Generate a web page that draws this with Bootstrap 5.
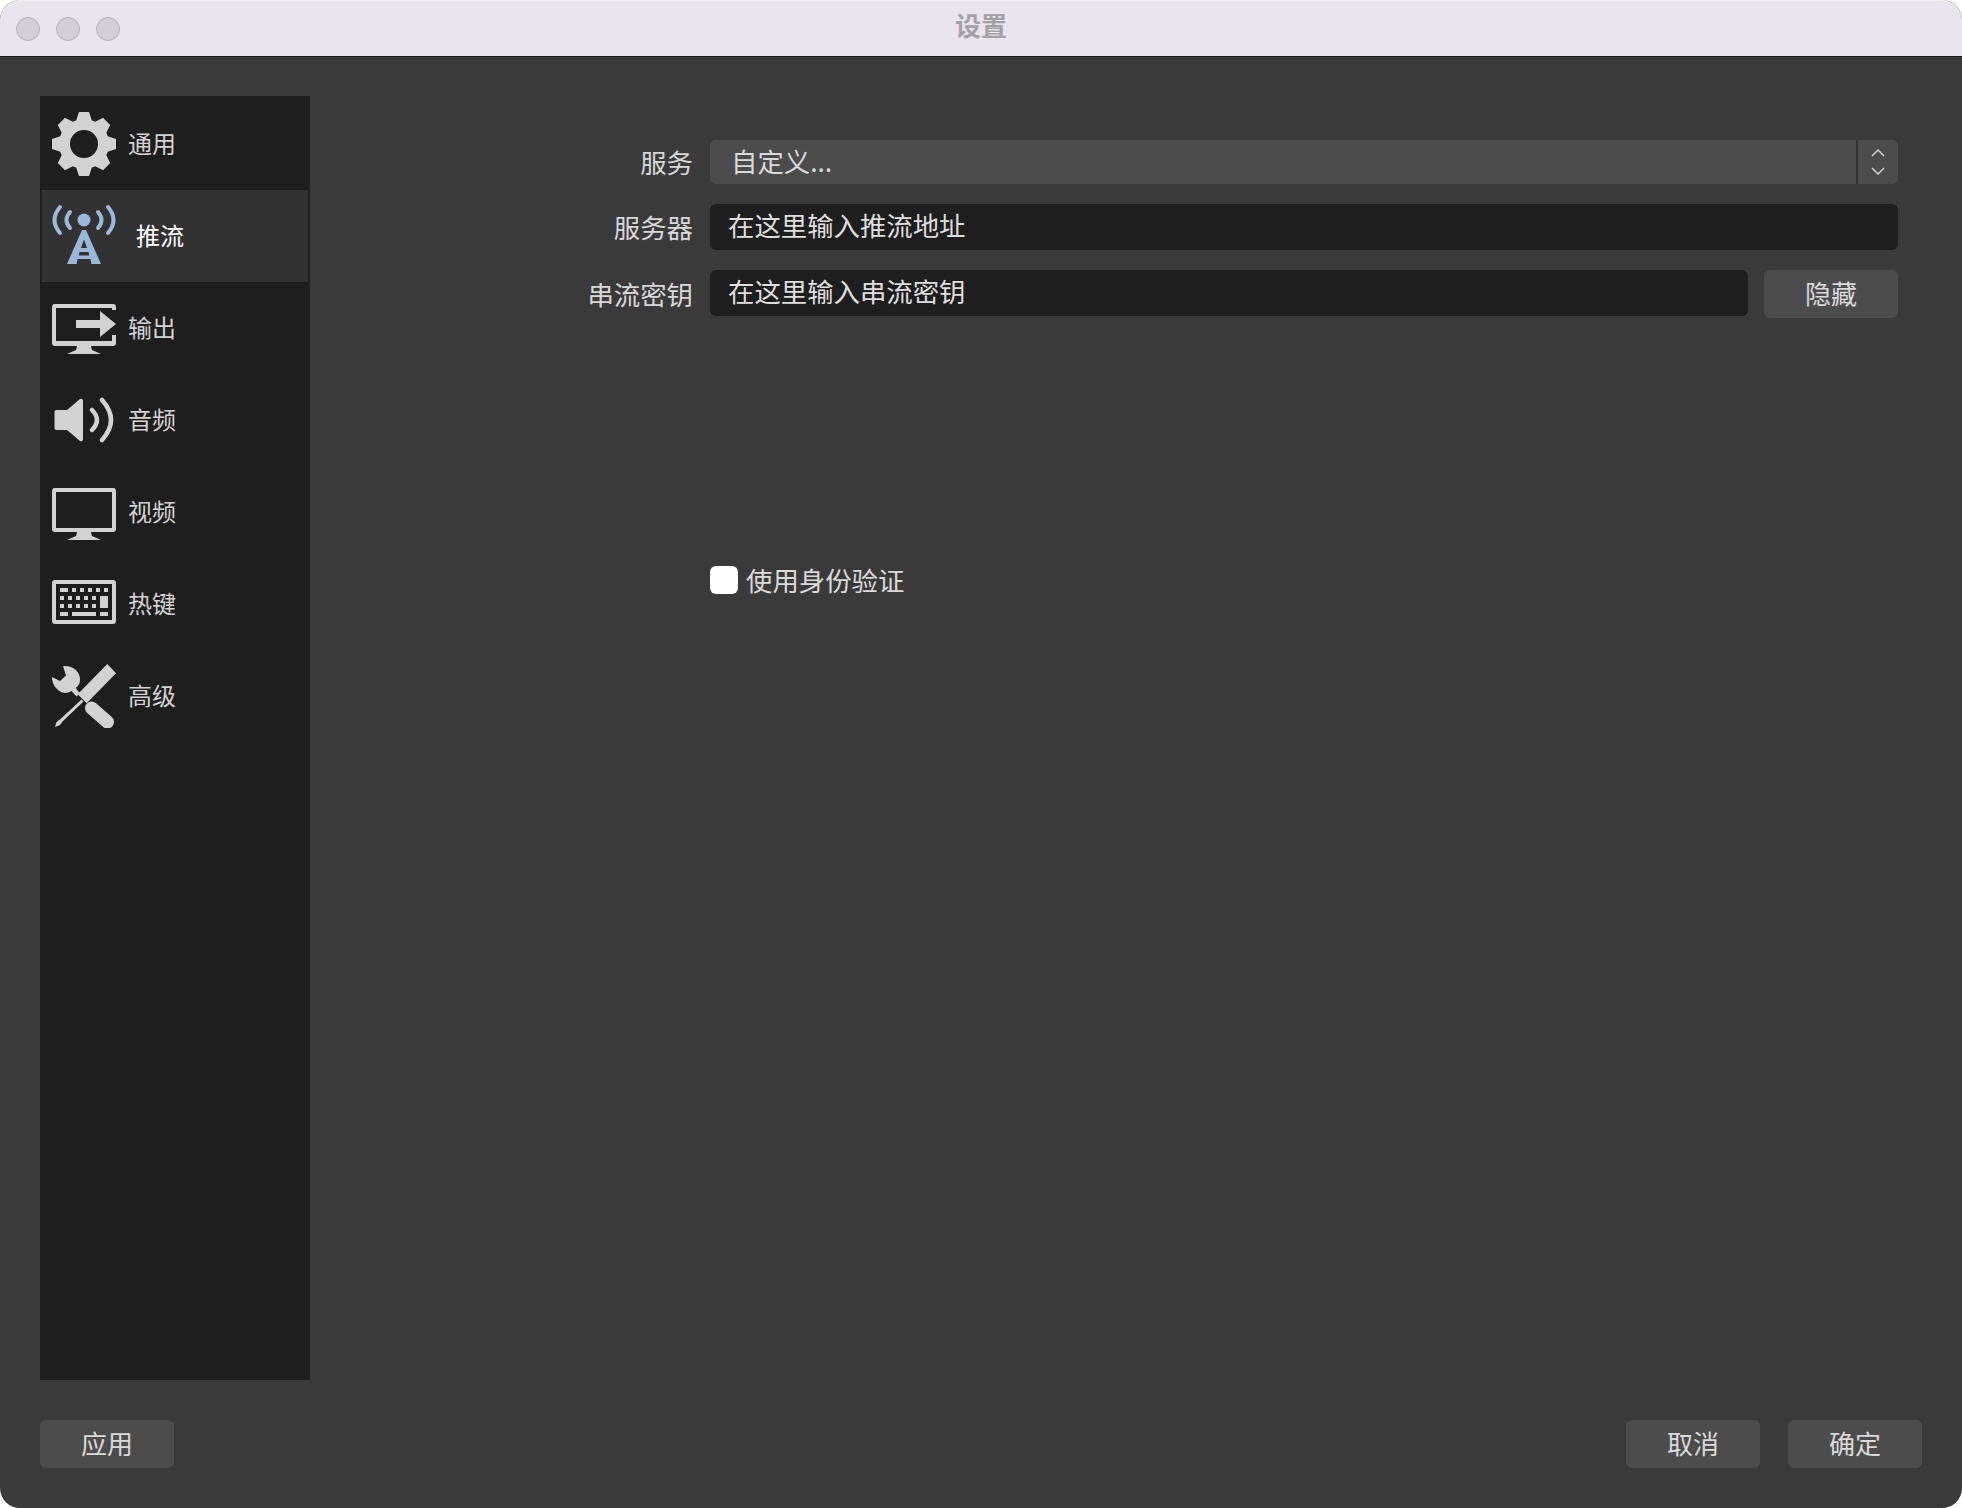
<!DOCTYPE html>
<html lang="zh">
<head>
<meta charset="utf-8">
<title>设置</title>
<link href="https://cdn.jsdelivr.net/npm/bootstrap@5.3.0/dist/css/bootstrap.min.css" rel="stylesheet">
<style>
html, body { height: 100%; background: #fff; }
body { font-family: "Noto Sans CJK SC", "Liberation Sans", sans-serif; overflow: hidden; }
.win { width: 1962px; height: 1508px; background: #3a3a3a; border-radius: 20px; overflow: hidden; }
.tbar { height: 57px; background: #e8e6ec; border-bottom: 1px solid #1a1a1a; border-top: 1px solid #efeef2; }
.dot { width: 24px; height: 24px; border-radius: 50%; background: #d2cfd6; border: 1px solid #b4b1b8; }
.dots { padding-left: 16px; gap: 16px; }
.ttl { left: 0; right: 0; top: 8px; font-size: 26px; line-height: 32px; font-weight: 700; color: #a3a1a7; }
.mainrow { height: 1363px; padding: 39px 64px 0 40px; }
.side { width: 270px; height: 1284px; background: #1e1e1e; padding: 2px; flex: none; }
.side .nav-link { height: 92px; padding: 0 0 2px 10px; color: #d2d2d2; font-size: 24px; gap: 12px; border-radius: 0; }
.side .nav-link svg { flex: none; fill: #d2d2d2; margin-bottom: -2px; }
.side .nav-link.active { background: #323232; color: #fff; }
.side .nav-link.active svg { fill: #9ab9da; }
.side .nav-link.active span { margin-left: 8px; }
.st { fill: none; stroke: #d2d2d2; stroke-linecap: round; }
.st2 { fill: none; stroke: #9ab9da; stroke-linecap: round; }
.formp { padding-top: 44px; }
.frow { margin-bottom: 20px; }
.lbl { width: 400px; padding-right: 17px; text-align: right; flex: none; color: #d8d8d8; font-size: 26.400px; line-height: 1; }
.fld { background: #1e1e1e; color: #dedede; border: 0; border-radius: 6px; height: 46px; padding: 0 18px; font-size: 26.400px; line-height: 42px; }
.sel { background: #4c4c4c; color: #dadada; border-radius: 6px; height: 44px; font-size: 26.400px; line-height: 42px; overflow: hidden; }
.sel-t { padding-left: 21px; }
.sel-b { width: 42px; border-left: 2px solid #333; flex: none; }
.sbtn { width: 134px; height: 48px; background: #4c4c4c; color: #dadada; border: 0; border-radius: 6px; font-size: 26px; line-height: 44px; padding: 0 0 2px; flex: none; }
.sbtn:hover { background: #4c4c4c; color: #dadada; }
.chkrow { margin-top: 248px; margin-left: 400px; padding-left: 0; font-size: 26.400px; color: #dadada; line-height: 26px; gap: 8px; min-height: 0; margin-bottom: 0; }
.chkrow .form-check-input { width: 28px; height: 28px; margin: 0; border: 0; border-radius: 6px; background: #fff; flex: none; float: none; }
.bot { padding: 0 40px; height: 88px; }
.bot-g { gap: 28px; }
.gap16 { gap: 16px; }
</style>
</head>
<body>
<div class="win d-flex flex-column">
  <div class="tbar position-relative d-flex align-items-center">
    <div class="d-flex dots"><div class="dot"></div><div class="dot"></div><div class="dot"></div></div>
    <div class="ttl position-absolute text-center">设置</div>
  </div>
  <div class="mainrow d-flex">
    <nav class="side nav flex-column flex-nowrap">
      <a class="nav-link d-flex align-items-center" href="#">
        <svg width="64" height="64" viewBox="0 0 64 64"><path fill-rule="evenodd" d="M32 7a25 25 0 1 0 0 50 25 25 0 0 0 0-50zM32 18a14 14 0 1 1 0 28 14 14 0 0 1 0-28z"/><g><path d="M24 9L27 0H37L40 9z"/><path d="M24 9L27 0H37L40 9z" transform="rotate(45 32 32)"/><path d="M24 9L27 0H37L40 9z" transform="rotate(90 32 32)"/><path d="M24 9L27 0H37L40 9z" transform="rotate(135 32 32)"/><path d="M24 9L27 0H37L40 9z" transform="rotate(180 32 32)"/><path d="M24 9L27 0H37L40 9z" transform="rotate(225 32 32)"/><path d="M24 9L27 0H37L40 9z" transform="rotate(270 32 32)"/><path d="M24 9L27 0H37L40 9z" transform="rotate(315 32 32)"/></g></svg>
        <span>通用</span>
      </a>
      <a class="nav-link active d-flex align-items-center" href="#">
        <svg width="64" height="64" viewBox="0 0 64 64"><circle cx="32" cy="16" r="6.500"/><path class="st2" stroke-width="4" d="M18 8Q11 16 18 24M46 8Q53 16 46 24"/><path class="st2" stroke-width="4" d="M8 3Q-3 16 8 29M56 3Q67 16 56 29"/><path fill-rule="evenodd" d="M30 26h4l15 34H39.500l-1-5H25.500l-1 5H15zM32 35.500L29 44h6zM27.500 48l-.8 3.500h10.600l-.8-3.500z"/></svg>
        <span>推流</span>
      </a>
      <a class="nav-link d-flex align-items-center" href="#">
        <svg width="64" height="64" viewBox="0 0 64 64"><path d="M3 8h58a3 3 0 0 1 3 3v3h-4v-2H4v33h56v-6h4v8a3 3 0 0 1-3 3H39l1 4 9 4H15l9-4 1-4H3a3 3 0 0 1-3-3V11a3 3 0 0 1 3-3z"/><path d="M24 24h24v-9l16 13-16 13v-9H24z"/></svg>
        <span>输出</span>
      </a>
      <a class="nav-link d-flex align-items-center" href="#">
        <svg width="64" height="64" viewBox="0 0 64 64"><path d="M4.500 22H15L28 11a2 2 0 0 1 3 1.500v39a2 2 0 0 1-3 1.500L15 42H4.500a2 2 0 0 1-2-2V24a2 2 0 0 1 2-2z"/><path class="st" stroke-width="4.500" d="M40 22Q50 32 40 42M50 12Q68 32 50 52"/></svg>
        <span>音频</span>
      </a>
      <a class="nav-link d-flex align-items-center" href="#">
        <svg width="64" height="64" viewBox="0 0 64 64"><path fill-rule="evenodd" d="M3 8h58a3 3 0 0 1 3 3v38a3 3 0 0 1-3 3H39l1 4 9 4H15l9-4 1-4H3a3 3 0 0 1-3-3V11a3 3 0 0 1 3-3zM4 12v36h56V12z"/></svg>
        <span>视频</span>
      </a>
      <a class="nav-link d-flex align-items-center" href="#">
        <svg width="64" height="64" viewBox="0 0 64 64"><path fill-rule="evenodd" d="M3 8h58a3 3 0 0 1 3 3v38a3 3 0 0 1-3 3H3a3 3 0 0 1-3-3V11a3 3 0 0 1 3-3zM4 12v36h56V12z"/><path d="M8 16h8v4H8zM20 16h4v4h-4zM28 16h4v4h-4zM36 16h4v4h-4zM44 16h4v4h-4zM52 16h4v4h-4zM8 24h4v4H8zM16 24h4v4h-4zM24 24h4v4h-4zM32 24h4v4h-4zM40 24h4v4h-4zM48 24h8v12h-8zM8 32h4v4H8zM16 32h4v4h-4zM24 32h4v4h-4zM32 32h4v4h-4zM40 32h4v4h-4zM8 40h8v4H8zM20 40h24v4H20zM48 40h8v4h-8z"/></svg>
        <span>热键</span>
      </a>
      <a class="nav-link d-flex align-items-center" href="#">
        <svg width="64" height="64" viewBox="0 0 64 64"><path d="M55.300 0L64 9.300 34.700 39.300 25.700 30.300z"/><path d="M29.500 35.500L31.500 37.500 11 57 8 61 3 63 4.500 58 8.500 55z"/><path class="st" stroke-width="13" d="M39.500 44L55.500 58"/><path d="M11 2C20 1 28 7 28 15c0 3-.5 5-2 7l-2 1.500 1 2.500 3 3-3.500 3.500-5-5.500c-3 2-6 2.500-9 1.500C4 26 0 20 0 13l8 4 6-5.500z"/></svg>
        <span>高级</span>
      </a>
    </nav>
    <div class="formp flex-grow-1">
      <div class="frow d-flex align-items-center">
        <div class="lbl">服务</div>
        <div class="sel d-flex flex-grow-1">
          <div class="sel-t flex-grow-1">自定义...</div>
          <div class="sel-b d-flex align-items-center justify-content-center">
            <svg width="14" height="26" viewBox="0 0 14 26"><path d="M1 7l6-6 6 6M1 19l6 6 6-6" fill="none" stroke="#cfcfcf" stroke-width="1.500"/></svg>
          </div>
        </div>
      </div>
      <div class="frow d-flex align-items-center">
        <div class="lbl">服务器</div>
        <div class="fld flex-grow-1">在这里输入推流地址</div>
      </div>
      <div class="d-flex align-items-start">
        <div class="lbl align-self-center">串流密钥</div>
        <div class="d-flex align-items-start flex-grow-1 gap16">
          <div class="fld flex-grow-1">在这里输入串流密钥</div>
          <button class="btn sbtn" type="button">隐藏</button>
        </div>
      </div>
      <div class="form-check d-flex align-items-center chkrow">
        <input class="form-check-input" type="checkbox" id="auth">
        <label class="form-check-label" for="auth">使用身份验证</label>
      </div>
    </div>
  </div>
  <div class="bot d-flex justify-content-between align-items-start">
    <button class="btn sbtn" type="button">应用</button>
    <div class="d-flex bot-g">
      <button class="btn sbtn" type="button">取消</button>
      <button class="btn sbtn" type="button">确定</button>
    </div>
  </div>
</div>
<script src="https://cdn.jsdelivr.net/npm/bootstrap@5.3.0/dist/js/bootstrap.bundle.min.js"></script>
</body>
</html>
